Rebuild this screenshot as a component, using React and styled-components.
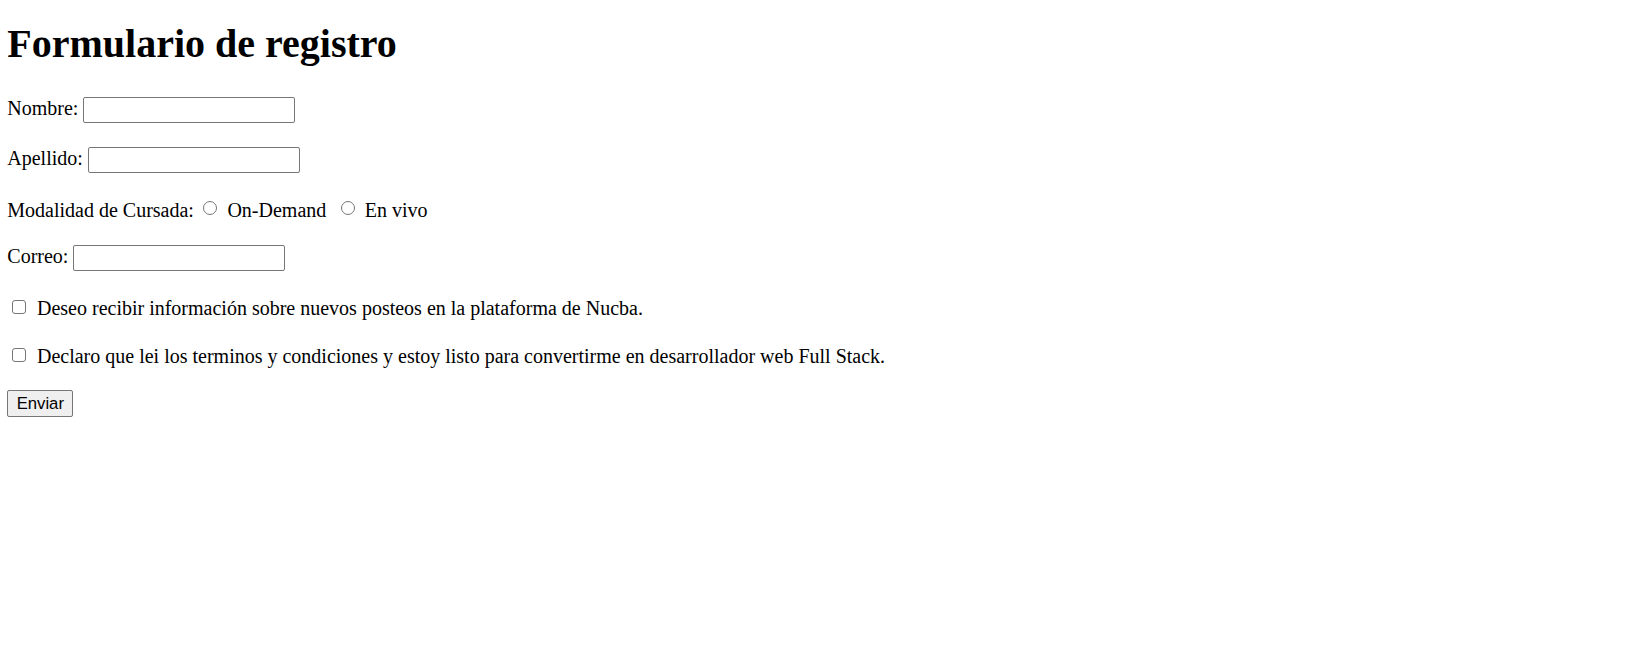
import React from "react";
import styled, { createGlobalStyle } from "styled-components";

const GlobalStyle = createGlobalStyle`
  html, body {
    margin: 0;
    padding: 0;
    background: #ffffff;
  }
  body {
    font-family: "Liberation Serif", "Times New Roman", serif;
    font-size: 20px;
    color: #000000;
  }
`;

const Page = styled.div`
  padding: 0 7.3px;
`;

const Title = styled.h1`
  font-size: 40px;
  line-height: 46px;
  font-weight: bold;
  margin: 21px 0 28px;
`;

const Row = styled.p`
  margin: 20px 0;
  line-height: 23px;
`;

const TextInput = styled.input`
  box-sizing: border-box;
  width: 212px;
  height: 26px;
  margin: 2px 0;
  padding: 1px 3px;
  border: 1px solid #767676;
  border-radius: 2px;
  font-family: "Liberation Sans", Arial, sans-serif;
  font-size: 16.7px;
  vertical-align: baseline;
  background: #ffffff;
`;

const Radio = styled.input`
  appearance: none;
  box-sizing: border-box;
  width: 14px;
  height: 14px;
  margin: 6px 5px 8px 9.5px;
  border: 1px solid #767676;
  border-radius: 50%;
  background: #ffffff;
  vertical-align: -6px;
`;

const Check = styled.input`
  appearance: none;
  box-sizing: border-box;
  width: 14px;
  height: 14px;
  margin: 6.5px 5.7px 8px 5px;
  border: 1px solid #767676;
  border-radius: 3px;
  background: #ffffff;
  vertical-align: -7px;
`;

const Submit = styled.button`
  box-sizing: border-box;
  display: block;
  width: 66px;
  height: 27px;
  margin: 1.5px 0 0;
  padding: 1px 8px;
  border: 1px solid #767676;
  border-radius: 2px;
  background: #efefef;
  font-family: "Liberation Sans", Arial, sans-serif;
  font-size: 16.7px;
  color: #000000;
`;

export default function App() {
  return (
    <Page>
      <GlobalStyle />
      <Title>Formulario de registro</Title>
      <form onSubmit={(e) => e.preventDefault()}>
        <Row>
          <label>
            Nombre: <TextInput type="text" name="nombre" />
          </label>
        </Row>
        <Row>
          <label>
            Apellido: <TextInput type="text" name="apellido" />
          </label>
        </Row>
        <Row>
          Modalidad de Cursada:
          <Radio type="radio" name="modalidad" value="on-demand" /> On-Demand{" "}
          <Radio type="radio" name="modalidad" value="en-vivo" /> En vivo
        </Row>
        <Row>
          <label>
            Correo: <TextInput type="email" name="correo" />
          </label>
        </Row>
        <Row>
          <label>
            <Check type="checkbox" name="posteos" /> Deseo recibir información
            sobre nuevos posteos en la plataforma de Nucba.
          </label>
        </Row>
        <Row>
          <label>
            <Check type="checkbox" name="terminos" /> Declaro que lei los
            terminos y condiciones y estoy listo para convertirme en
            desarrollador web Full Stack.
          </label>
        </Row>
        <Submit type="submit">Enviar</Submit>
      </form>
    </Page>
  );
}
